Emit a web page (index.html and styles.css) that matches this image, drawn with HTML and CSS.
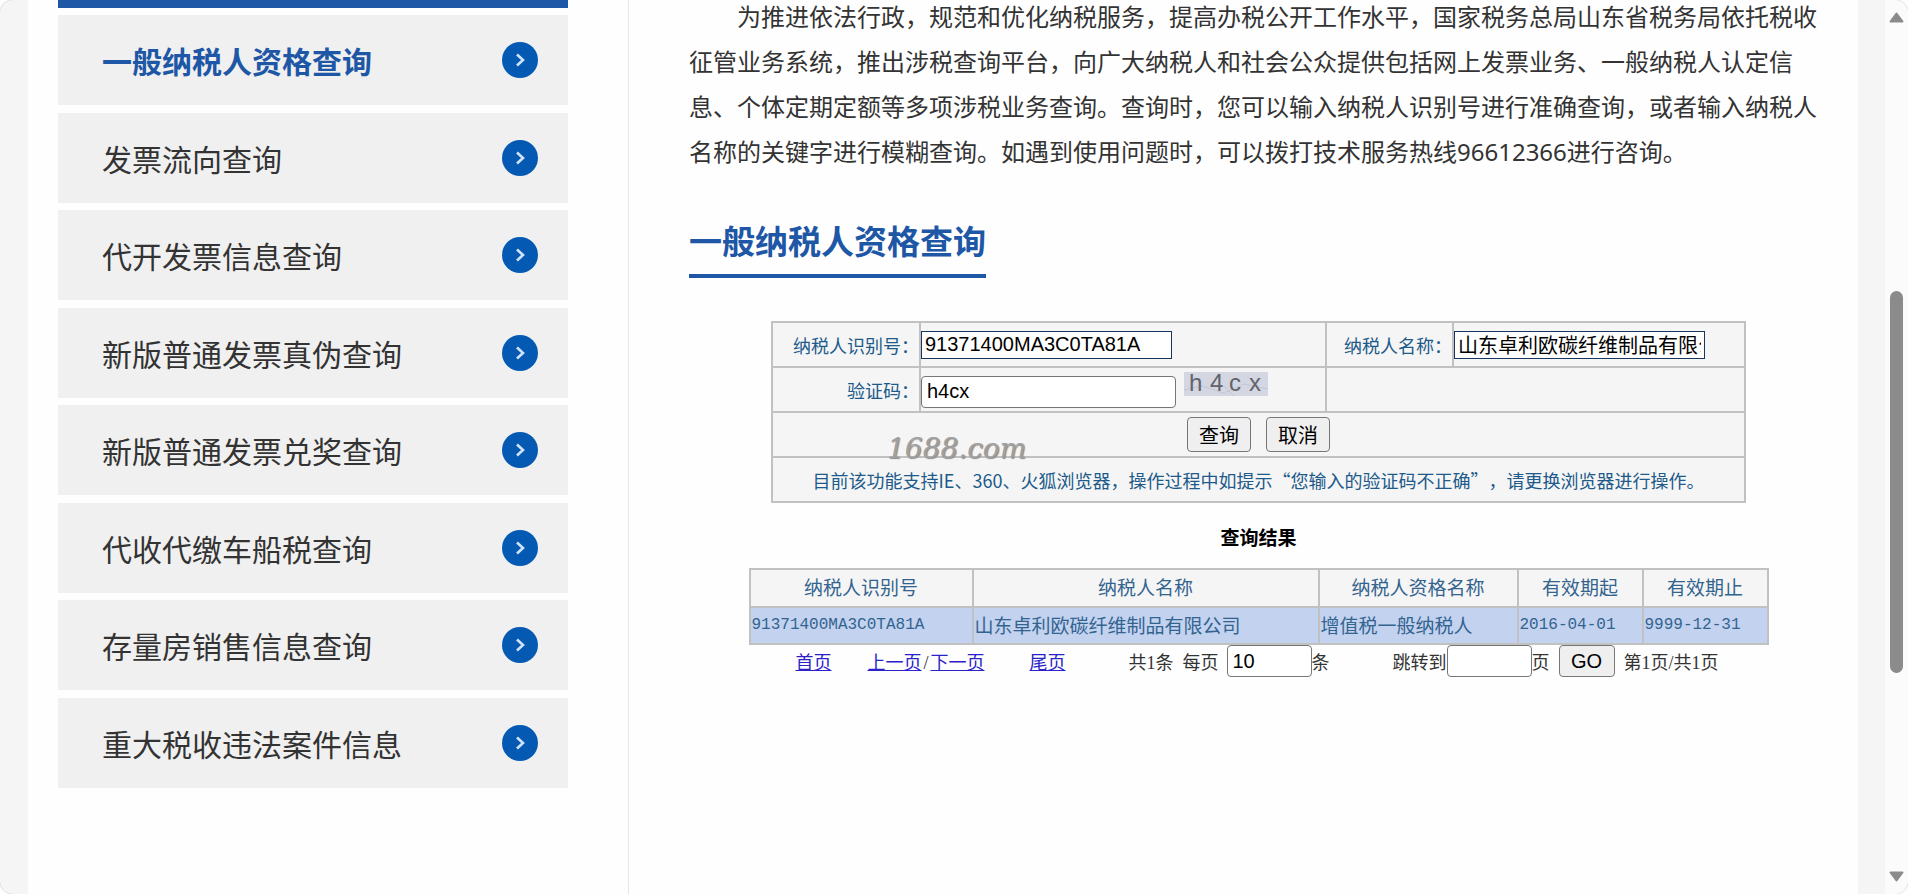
FILE: index.html
```html
<!DOCTYPE html>
<html lang="zh-CN">
<head>
    <meta charset="UTF-8">
    <title>一般纳税人资格查询</title>
    <link rel="stylesheet" href="styles.css">
</head>
<body>
<svg class="defs" aria-hidden="true">
    <symbol id="arrow" viewBox="0 0 36 36">
        <circle cx="18" cy="18" r="18" fill="#0459b3"/>
        <path d="M15 12.500l6 5.500-6 5.500" fill="none" stroke="#cfe3fa" stroke-width="2.600"/>
    </symbol>
</svg>

<div class="window">

    <div class="page">

        <div class="side">
            <div class="sidetop"></div>
            <ul class="menu">
                <li><a class="current" href="#">一般纳税人资格查询<svg class="arrow"><use href="#arrow"/></svg></a></li>
                <li><a href="#">发票流向查询<svg class="arrow"><use href="#arrow"/></svg></a></li>
                <li><a href="#">代开发票信息查询<svg class="arrow"><use href="#arrow"/></svg></a></li>
                <li><a href="#">新版普通发票真伪查询<svg class="arrow"><use href="#arrow"/></svg></a></li>
                <li><a href="#">新版普通发票兑奖查询<svg class="arrow"><use href="#arrow"/></svg></a></li>
                <li><a href="#">代收代缴车船税查询<svg class="arrow"><use href="#arrow"/></svg></a></li>
                <li><a href="#">存量房销售信息查询<svg class="arrow"><use href="#arrow"/></svg></a></li>
                <li><a href="#">重大税收违法案件信息<svg class="arrow"><use href="#arrow"/></svg></a></li>
            </ul>
        </div>

        <div class="content">

            <p class="intro">为推进依法行政，规范和优化纳税服务，提高办税公开工作水平，国家税务总局山东省税务局依托税收征管业务系统，推出涉税查询平台，向广大纳税人和社会公众提供包括网上发票业务、一般纳税人认定信息、个体定期定额等多项涉税业务查询。查询时，您可以输入纳税人识别号进行准确查询，或者输入纳税人名称的关键字进行模糊查询。如遇到使用问题时，可以拨打技术服务热线96612366进行咨询。</p>

            <h2>一般纳税人资格查询</h2>

            <form class="query" onsubmit="return false">
                <table class="querytable">
                    <colgroup>
                        <col class="c1"><col class="c2"><col class="c3"><col class="c4">
                    </colgroup>
                    <tr>
                        <td class="name"><label for="nsrsbh">纳税人识别号：</label></td>
                        <td><input class="field" id="nsrsbh" type="text" value="91371400MA3C0TA81A"></td>
                        <td class="name"><label for="nsrmc">纳税人名称：</label></td>
                        <td><input class="field" id="nsrmc" type="text" value="山东卓利欧碳纤维制品有限公司"></td>
                    </tr>
                    <tr>
                        <td class="name"><label for="yzm">验证码：</label></td>
                        <td>
                            <div class="code">
                                <input class="box" id="yzm" type="text" value="h4cx">
                                <svg class="captcha" viewBox="0 0 84 24" role="img" aria-label="验证码图片">
                                    <rect width="84" height="24" fill="#d4d6e1"/>
                                    <path d="M0 18l18-4 22 7 20-9 24 5M40 14l10 10" fill="none" stroke="#c3c6d4"/>
                                    <text y="19" x="5 26 45 65">h4cx</text>
                                </svg>
                            </div>
                        </td>
                        <td colspan="2"></td>
                    </tr>
                    <tr>
                        <td colspan="4">
                            <div class="buttons">
                                <button type="submit">查询</button>
                                <button type="reset">取消</button>
                            </div>
                        </td>
                    </tr>
                    <tr>
                        <td class="tip" colspan="4">目前该功能支持IE、360、火狐浏览器，操作过程中如提示“您输入的验证码不正确”，请更换浏览器进行操作。</td>
                    </tr>
                </table>
                <span class="mark">1688.com</span>
            </form>

            <div class="result">
                <h3>查询结果</h3>
                <table class="resulttable">
                    <colgroup>
                        <col class="r1"><col class="r2"><col class="r3"><col class="r4"><col class="r4">
                    </colgroup>
                    <tr>
                        <th>纳税人识别号</th>
                        <th>纳税人名称</th>
                        <th>纳税人资格名称</th>
                        <th>有效期起</th>
                        <th>有效期止</th>
                    </tr>
                    <tr>
                        <td class="num">91371400MA3C0TA81A</td>
                        <td>山东卓利欧碳纤维制品有限公司</td>
                        <td>增值税一般纳税人</td>
                        <td class="num">2016-04-01</td>
                        <td class="num">9999-12-31</td>
                    </tr>
                </table>
                <div class="pager">
                    <a href="#">首页</a>
                    <span class="prevnext"><a href="#">上一页</a><i>/</i><a href="#">下一页</a></span>
                    <a href="#">尾页</a>
                    <span class="total">共1条</span>
                    <label class="size" for="size">每页</label>
                    <input class="box" id="size" type="text" value="10">
                    <span>条</span>
                    <label class="jump" for="jump">跳转到</label>
                    <input class="box" id="jump" type="text">
                    <span>页</span>
                    <button type="button">GO</button>
                    <span>第1页/共1页</span>
                </div>
            </div>

        </div>

    </div>

    <div class="scroll" aria-hidden="true">
        <svg width="15" height="11" viewBox="0 0 15 11"><path d="M7.500 1.500L13.500 9.500H1.500z" fill="#8b8b8b" stroke="#8b8b8b" stroke-width="2" stroke-linejoin="round"/></svg>
        <div class="thumb"></div>
        <svg width="15" height="11" viewBox="0 0 15 11"><path d="M7.500 9.500L1.500 1.500h12z" fill="#8b8b8b" stroke="#8b8b8b" stroke-width="2" stroke-linejoin="round"/></svg>
    </div>

</div>

</body>
</html>
```
FILE: styles.css
```css
*{
    margin: 0;
    padding: 0;
    box-sizing: border-box;
}

body{
    background: #fdfdfd;
    color: #333;
    font-family: "Noto Sans CJK SC", sans-serif;
    text-spacing-trim: space-all;
}

.defs{
    display: none;
}

.window{
    display: flex;
    min-height: 100vh;
    padding-left: 28px;
    background: #f5f5f5;
    border-radius: 14px;
    box-shadow: 0 0 0 1px #e2e2e2;
    overflow: hidden;
}

.page{
    flex: 1;
    display: flex;
    margin-right: 27px;
    padding: 0 30px;
    background: #fefefe;
}

/* 左侧菜单 */
.side{
    flex: 0 0 510px;
}

.sidetop{
    height: 8px;
    margin-bottom: 7px;
    background: #1e57a6;
}

.menu{
    display: flex;
    flex-direction: column;
    justify-content: space-between;
    min-height: 773px;
    list-style: none;
}

.menu a{
    display: flex;
    justify-content: space-between;
    align-items: center;
    height: 90px;
    padding: 0 30px 0 44px;
    background: #f0f0f0;
    color: #333;
    font-size: 30px;
    text-decoration: none;
}

.menu a.current{
    color: #1e57a6;
    font-weight: bold;
}

.arrow{
    width: 36px;
    height: 36px;
}

/* 右侧内容 */
.content{
    flex: 1;
    min-width: 0;
    margin-left: 60px;
    padding-left: 60px;
    border-left: 1px solid #e6e6e6;
}

.intro{
    margin-top: -6px;
    font-family: "Noto Sans", "Noto Sans CJK SC", sans-serif;
    font-size: 24px;
    line-height: 45px;
    text-indent: 2em;
}

h2{
    width: fit-content;
    margin-top: 44px;
    padding-bottom: 12px;
    border-bottom: 4px solid #1e57a6;
    color: #1e57a6;
    font-size: 33px;
    line-height: 44px;
}

table{
    width: 100%;
    border-collapse: collapse;
    table-layout: fixed;
}

th,td{
    border: 2px solid #c1c1c1;
}

input,button{
    color: #000;
    font-family: "Liberation Sans", "Noto Sans CJK SC", sans-serif;
    font-size: 20px;
}

button{
    border: 1px solid #767676;
    border-radius: 4px;
    background: #efefef;
}

.box{
    height: 32px;
    padding: 0 5px;
    border: 1px solid #767676;
    border-radius: 4px;
    background: #fff;
}

.query{
    position: relative;
    max-width: 975px;
    margin: 43px auto 0;
}

.querytable td{
    height: 45px;
    background: #f5f5f5;
    color: #205a8a;
    font-size: 18px;
    line-height: 24px;
}

.c1{
    width: 148px;
}

.c2{
    width: 406px;
}

.c3{
    width: 127px;
}

.querytable .name{
    text-align: right;
}

.field{
    display: block;
    width: 251px;
    height: 28px;
    padding: 0 3px;
    border: 1px solid #17365f;
    background: #fff;
}

.code{
    display: flex;
}

.code .box{
    width: 255px;
    margin-top: 4px;
}

.captcha{
    width: 84px;
    height: 24px;
    margin-left: 8px;
    overflow: visible;
}

.captcha text{
    fill: #62636b;
    font-family: "Liberation Sans", sans-serif;
    font-size: 24px;
}

.buttons{
    display: flex;
    justify-content: center;
    gap: 15px;
}

.buttons button{
    width: 64px;
    height: 35px;
}

.querytable .tip{
    text-align: center;
    white-space: nowrap;
}

.mark{
    position: absolute;
    left: 116px;
    top: 112px;
    color: #a0a0a0;
    font-family: "DejaVu Serif", serif;
    font-size: 28px;
    font-style: italic;
    line-height: 32px;
    text-shadow: 1px 1px 1px #888;
}

/* 查询结果 */
.result{
    max-width: 1020px;
    margin: 0 auto;
}

h3{
    padding: 18px 0 15px;
    color: #000;
    font-size: 19px;
    line-height: 32px;
    text-align: center;
}

.resulttable th,.resulttable td{
    height: 38px;
    color: #33648f;
    font-size: 19px;
    font-weight: normal;
    line-height: 24px;
    text-align: left;
    white-space: nowrap;
}

.resulttable th{
    padding-bottom: 2px;
    background: #f5f5f5;
    text-align: center;
}

.resulttable td{
    height: 37px;
    padding: 0 0 2px 1px;
    background: #c2d2ef;
}

.resulttable .num{
    font-family: "Liberation Mono", monospace;
    font-size: 16px;
}

.r1{
    width: 223px;
}

.r2{
    width: 346px;
}

.r3{
    width: 199px;
}

.pager{
    display: flex;
    align-items: center;
    padding-left: 47px;
    font-family: "Liberation Serif", "Noto Sans CJK SC", serif;
    font-size: 18px;
    white-space: nowrap;
}

.pager a{
    color: #2a22c8;
}

.pager i{
    display: inline-block;
    width: 9px;
    font-style: normal;
    text-align: center;
}

.pager .prevnext{
    margin: 0 45px 0 36px;
}

.pager .total{
    margin-left: 63px;
}

.pager .size{
    margin: 0 8px 0 9px;
}

.pager .jump{
    margin-left: 63px;
}

.pager .box{
    width: 85px;
}

.pager button{
    width: 56px;
    height: 32px;
    margin: 0 9px;
}

/* 滚动条 */
.scroll{
    flex: 0 0 23px;
    display: flex;
    flex-direction: column;
    align-items: center;
    padding: 12px 0;
    background: #fbfbfb;
}

.thumb{
    width: 13px;
    height: 382px;
    margin: 268px 0 auto;
    border-radius: 7px;
    background: #8b8b8b;
}
```
